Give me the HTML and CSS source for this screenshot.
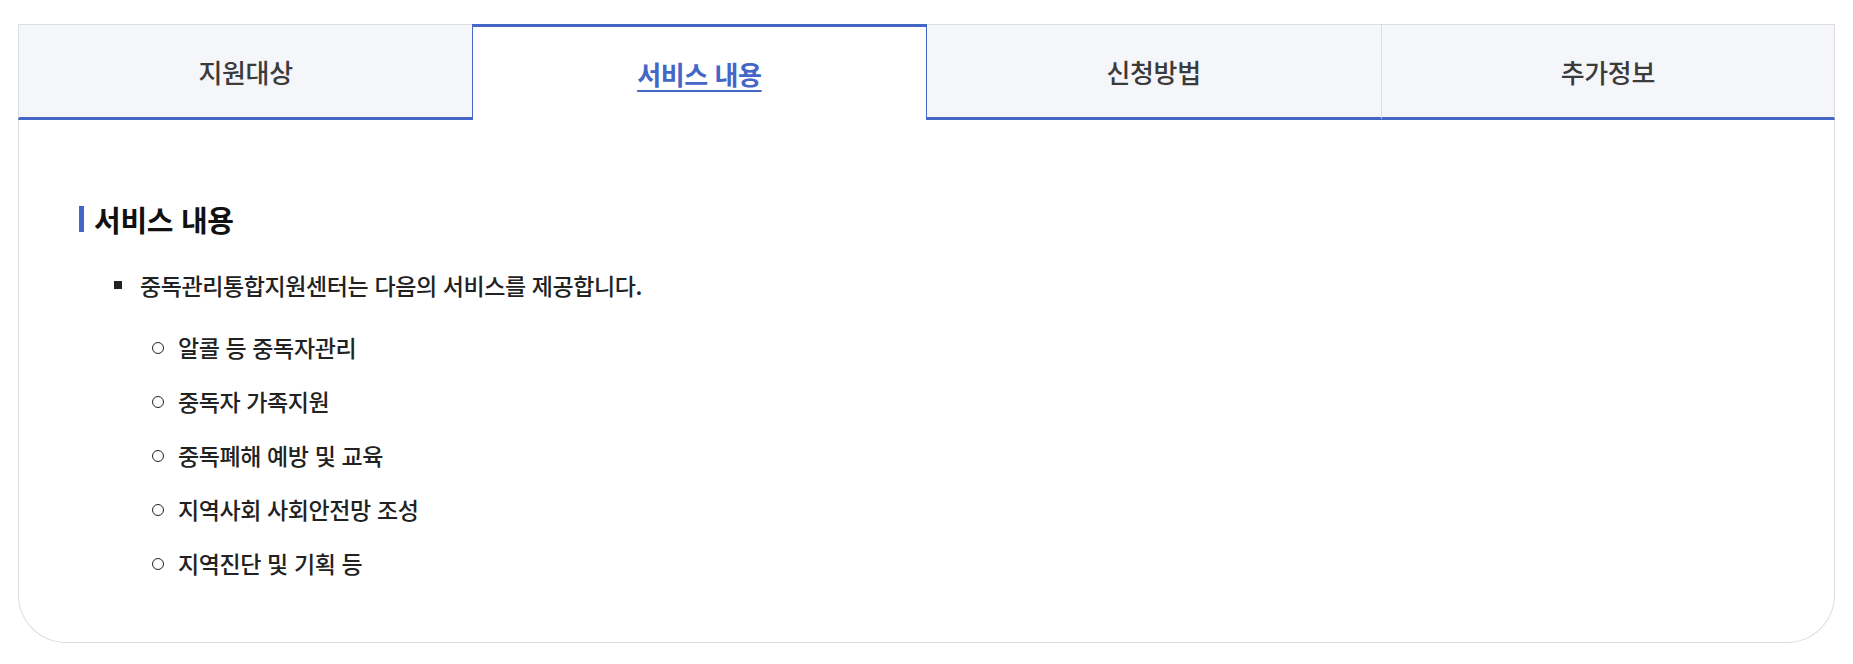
FILE: index.html
```html
<!DOCTYPE html>
<html lang="ko">
<head>
<meta charset="utf-8">
<title>서비스 내용</title>
<link rel="stylesheet" href="styles.css">
</head>
<body>
<div class="wrap">
  <ul class="tabs">
    <li class="tab"><a href="#">지원대상</a></li>
    <li class="tab active"><a href="#">서비스 내용</a></li>
    <li class="tab"><a href="#">신청방법</a></li>
    <li class="tab last"><a href="#">추가정보</a></li>
  </ul>
  <div class="panel">
    <h3 class="title">서비스 내용</h3>
    <ul class="list">
      <li class="item">중독관리통합지원센터는 다음의 서비스를 제공합니다.
        <ul class="sub">
          <li>알콜 등 중독자관리</li>
          <li>중독자 가족지원</li>
          <li>중독폐해 예방 및 교육</li>
          <li>지역사회 사회안전망 조성</li>
          <li>지역진단 및 기획 등</li>
        </ul>
      </li>
    </ul>
  </div>
</div>
</body>
</html>
```
FILE: styles.css
```css
* { box-sizing: border-box; }
html, body { margin: 0; padding: 0; background: #fff; }
body {
  font-family: "Noto Sans CJK KR", "Noto Sans", sans-serif;
  color: #222;
}
.wrap {
  margin: 24px 18px 0;
}
.tabs {
  list-style: none;
  margin: 0;
  padding: 0;
  display: grid;
  grid-template-columns: repeat(4, 1fr);
}
.tab {
  height: 96px;
  background: #f5f6fa;
  border-top: 1px solid #dcdde3;
  border-bottom: 3px solid #4466c6;
  display: flex;
  align-items: center;
  justify-content: center;
}
.tab:first-child { border-left: 1px solid #dcdde3; }
.tab.last { border-left: 1px solid #dcdde3; border-right: 1px solid #dcdde3; }
.tab a {
  font-size: 26px;
  font-weight: 500;
  color: #3b3b3b;
  text-decoration: none;
  letter-spacing: -0.4px;
}
.tab.active {
  background: #fff;
  border-top: 3px solid #4466c6;
  border-left: 1px solid #4466c6;
  border-right: 1px solid #4466c6;
  border-bottom: 0;
}
.tab.active a {
  color: #4466c6;
  font-weight: 700;
  text-decoration: underline;
  text-underline-offset: 5px;
  text-decoration-thickness: 2px;
}
.panel {
  border: 1px solid #dcdcdc;
  border-top: 0;
  border-radius: 0 0 48px 48px;
  padding: 84px 60px 64px;
}
.title {
  margin: 0;
  display: flex;
  align-items: center;
  gap: 10px;
  font-size: 29px;
  line-height: 30px;
  font-weight: 700;
  color: #111;
  letter-spacing: -0.3px;
}
.title::before {
  content: "";
  width: 5px;
  height: 26px;
  background: #4466c6;
}
.list {
  list-style: none;
  margin: 36px 0 0;
  padding: 0 0 0 35px;
}
.item {
  position: relative;
  padding-left: 26px;
  font-size: 23px;
  font-weight: 500;
  line-height: 30px;
  letter-spacing: -0.4px;
}
.item::before {
  content: "";
  position: absolute;
  left: 0;
  top: 11px;
  width: 8px;
  height: 8px;
  background: #222;
}
.sub {
  list-style: none;
  margin: 32px 0 0;
  padding: 0 0 0 12px;
}
.sub li {
  position: relative;
  padding-left: 26px;
  margin-bottom: 24px;
}
.sub li:last-child { margin-bottom: 0; }
.sub li::before {
  content: "";
  position: absolute;
  left: 0;
  top: 10px;
  width: 10px;
  height: 10px;
  border: 1.5px solid #222;
  border-radius: 50%;
}
```
